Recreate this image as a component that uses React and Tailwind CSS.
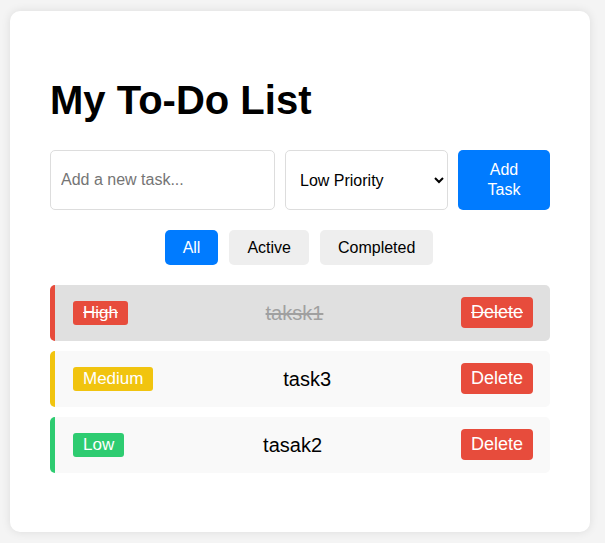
import { useState } from 'react';

const priorityColors = {
  High: 'bg-[#e74c3c]',
  Medium: 'bg-[#f1c40f]',
  Low: 'bg-[#2ecc71]',
};

const borderColors = {
  High: 'border-l-[#e74c3c]',
  Medium: 'border-l-[#f1c40f]',
  Low: 'border-l-[#2ecc71]',
};

const initialTasks = [
  { id: 1, text: 'taksk1', priority: 'High', done: true },
  { id: 2, text: 'task3', priority: 'Medium', done: false },
  { id: 3, text: 'tasak2', priority: 'Low', done: false },
];

export default function App() {
  const [tasks, setTasks] = useState(initialTasks);
  const [filter, setFilter] = useState('All');
  const [text, setText] = useState('');
  const [priority, setPriority] = useState('Low');

  const addTask = () => {
    if (!text.trim()) return;
    setTasks([...tasks, { id: Date.now(), text, priority, done: false }]);
    setText('');
  };

  const shown = tasks.filter((t) =>
    filter === 'All' ? true : filter === 'Active' ? !t.done : t.done
  );

  return (
    <div className="min-h-[543px] bg-[#f4f4f4] pt-[11px] pl-[10px] font-['Liberation_Sans',Arial,sans-serif] text-black">
      <div className="w-[580px] rounded-[10px] bg-white px-[40px] pt-[40px] pb-[59px] shadow-[0_0_10px_rgba(0,0,0,0.1)]">
        <h1 className="mt-[26px] mb-[27px] text-[40px] font-bold leading-[46px]">My To-Do List</h1>

        <div className="flex h-[60px] gap-[10px]">
          <input
            value={text}
            onChange={(e) => setText(e.target.value)}
            placeholder="Add a new task..."
            className="min-w-0 flex-1 rounded-[5px] border border-[#ddd] px-[10px] text-[16px] outline-none placeholder:text-[#757575]"
          />
          <select
            value={priority}
            onChange={(e) => setPriority(e.target.value)}
            className="w-[163px] rounded-[5px] border border-[#ddd] bg-white px-[10px] text-[16px]"
          >
            <option value="Low">Low Priority</option>
            <option value="Medium">Medium Priority</option>
            <option value="High">High Priority</option>
          </select>
          <button
            onClick={addTask}
            className="w-[92px] rounded-[5px] bg-[#007bff] px-[20px] text-[16px] leading-[20px] text-white"
          >
            Add Task
          </button>
        </div>

        <div className="mt-[20px] flex justify-center gap-[11px] pr-[2px]">
          {['All', 'Active', 'Completed'].map((f) => (
            <button
              key={f}
              onClick={() => setFilter(f)}
              className={
                'h-[35px] rounded-[5px] px-[18px] text-[16px] ' +
                (filter === f ? 'bg-[#007bff] text-white' : 'bg-[#eee] text-black')
              }
            >
              {f}
            </button>
          ))}
        </div>

        <ul className="mt-[20px] flex flex-col gap-[10px]">
          {shown.map((t) => (
            <li
              key={t.id}
              className={
                'flex h-[56px] items-center rounded-[5px] border-l-[5px] pl-[18px] pr-[17px] pb-[1px] ' +
                borderColors[t.priority] +
                (t.done ? ' bg-[#e0e0e0]' : ' bg-[#f9f9f9]')
              }
            >
              <span
                className={
                  'flex h-[24px] items-center rounded-[3px] px-[10px] text-[17px] text-white ' +
                  priorityColors[t.priority] +
                  (t.done ? ' line-through' : '')
                }
              >
                {t.priority}
              </span>
              <span
                onClick={() =>
                  setTasks(tasks.map((x) => (x.id === t.id ? { ...x, done: !x.done } : x)))
                }
                className={
                  'flex-1 cursor-pointer text-center text-[20px] ' +
                  (t.done ? 'text-[#a0a0a0] line-through' : 'text-black')
                }
              >
                {t.text}
              </span>
              <button
                onClick={() => setTasks(tasks.filter((x) => x.id !== t.id))}
                className={
                  'rounded-[4px] bg-[#e74c3c] px-[10px] py-[5px] text-[18px] leading-[20.7px] text-white' +
                  (t.done ? ' line-through' : '')
                }
              >
                Delete
              </button>
            </li>
          ))}
        </ul>
      </div>
    </div>
  );
}
